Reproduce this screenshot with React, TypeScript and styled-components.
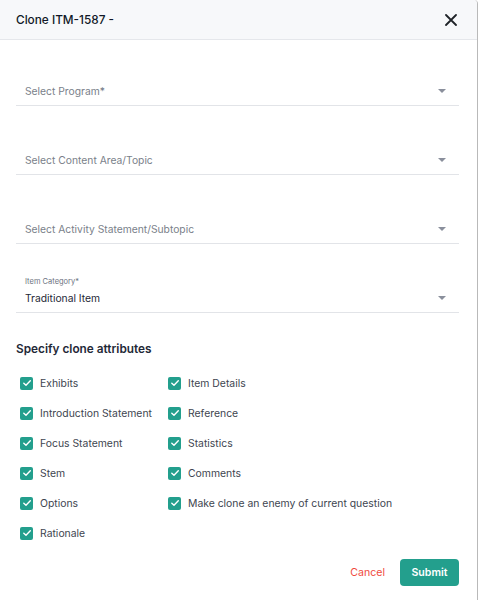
import React, { useState } from 'react';
import styled, { createGlobalStyle } from 'styled-components';

const GlobalStyle = createGlobalStyle`
  html, body {
    margin: 0;
    padding: 0;
    background: #ffffff;
  }
  body {
    font-family: Inter, "Noto Sans", sans-serif;
    -webkit-font-smoothing: antialiased;
  }
  * {
    box-sizing: border-box;
  }
`;

const Modal = styled.div`
  width: 478px;
  min-height: 600px;
  background: #ffffff;
  border-right: 1px solid #b9b9b9;
  border-top-right-radius: 4px;
  display: flex;
  flex-direction: column;
`;

const Header = styled.div`
  height: 40px;
  display: flex;
  align-items: center;
  justify-content: space-between;
  padding: 0 19px 0 16px;
  background: #f7f8fa;
  border-bottom: 1px solid #e5e7eb;
  border-top-right-radius: 4px;
`;

const Title = styled.h2`
  margin: 0;
  font-size: 11.8px;
  font-weight: 500;
  color: #111827;
`;

const CloseButton = styled.button`
  border: none;
  background: none;
  padding: 0;
  width: 14px;
  height: 14px;
  display: flex;
  align-items: center;
  justify-content: center;
  cursor: pointer;
`;

const Body = styled.div`
  padding: 17px 18px 0 16px;
  display: flex;
  flex-direction: column;
`;

const Fields = styled.div`
  display: flex;
  flex-direction: column;
  gap: 20px;
`;

const Field = styled.div`
  height: 49px;
  border-bottom: 1px solid #e2e4e8;
  display: flex;
  align-items: flex-end;
  justify-content: space-between;
  padding: 0 13px 7px 9px;
  cursor: pointer;
`;

const FieldText = styled.div`
  display: flex;
  flex-direction: column;
  gap: 4px;
`;

const FloatLabel = styled.span`
  font-size: 7.5px;
  line-height: 10px;
  color: #6b7280;
`;

const Value = styled.span<{ $placeholder?: boolean }>`
  font-size: 10.3px;
  line-height: 14px;
  color: ${p => (p.$placeholder ? '#7a7f8a' : '#1f2937')};
`;

const Caret = styled.span`
  width: 0;
  height: 0;
  border-left: 4px solid transparent;
  border-right: 4px solid transparent;
  border-top: 4px solid #8a8f9c;
  margin-bottom: 5px;
`;

const SectionTitle = styled.h3`
  margin: 27px 0 0;
  font-size: 11.8px;
  line-height: 18px;
  font-weight: 600;
  color: #1f2937;
`;

const CheckGrid = styled.div`
  margin-top: 10px;
  display: grid;
  grid-template-columns: 148px 1fr;
  grid-template-rows: repeat(6, 30px);
  grid-auto-flow: column;
`;

const CheckRow = styled.label`
  display: flex;
  align-items: center;
  gap: 7px;
  padding-left: 4px;
  font-size: 10.4px;
  color: #40454f;
  cursor: pointer;
  white-space: nowrap;
`;

const Box = styled.span<{ $checked: boolean }>`
  width: 13px;
  height: 13px;
  border-radius: 2px;
  background: ${p => (p.$checked ? '#239f8d' : '#ffffff')};
  border: ${p => (p.$checked ? 'none' : '1px solid #9ca3af')};
  display: flex;
  align-items: center;
  justify-content: center;
  flex-shrink: 0;
`;

const Footer = styled.div`
  margin-top: 11px;
  display: flex;
  justify-content: flex-end;
  align-items: center;
  gap: 15px;
`;

const CancelButton = styled.button`
  border: none;
  background: none;
  padding: 0;
  font-family: inherit;
  font-size: 10.6px;
  color: #f04a3e;
  cursor: pointer;
`;

const SubmitButton = styled.button`
  height: 27px;
  width: 59px;
  padding: 0;
  border: none;
  border-radius: 4px;
  background: #239f8d;
  color: #ffffff;
  font-family: inherit;
  font-size: 10.6px;
  font-weight: 600;
  cursor: pointer;
`;

const selects = [
  { label: '', value: 'Select Program*', placeholder: true },
  { label: '', value: 'Select Content Area/Topic', placeholder: true },
  { label: '', value: 'Select Activity Statement/Subtopic', placeholder: true },
  { label: 'Item Category*', value: 'Traditional Item', placeholder: false },
];

const attributes = [
  'Exhibits',
  'Introduction Statement',
  'Focus Statement',
  'Stem',
  'Options',
  'Rationale',
  'Item Details',
  'Reference',
  'Statistics',
  'Comments',
  'Make clone an enemy of current question',
];

const CloseIcon = () => (
  <svg width="12" height="12" viewBox="0 0 12 12">
    <path d="M1 1 L11 11 M11 1 L1 11" stroke="#1f2328" strokeWidth="1.8" strokeLinecap="round" />
  </svg>
);

const CheckIcon = () => (
  <svg width="10" height="10" viewBox="0 0 10 10">
    <path d="M1.8 5.2 L4 7.3 L8.3 2.8" stroke="#ffffff" strokeWidth="1.4" fill="none" strokeLinecap="round" strokeLinejoin="round" />
  </svg>
);

const App: React.FC = () => {
  const [checked, setChecked] = useState<boolean[]>(attributes.map(() => true));

  const toggle = (i: number) => {
    setChecked(prev => prev.map((c, j) => (j === i ? !c : c)));
  };

  return (
    <>
      <GlobalStyle />
      <Modal>
        <Header>
          <Title>Clone ITM-1587 -</Title>
          <CloseButton aria-label="Close">
            <CloseIcon />
          </CloseButton>
        </Header>
        <Body>
          <Fields>
            {selects.map(s => (
              <Field key={s.value}>
                <FieldText>
                  {s.label && <FloatLabel>{s.label}</FloatLabel>}
                  <Value $placeholder={s.placeholder}>{s.value}</Value>
                </FieldText>
                <Caret />
              </Field>
            ))}
          </Fields>

          <SectionTitle>Specify clone attributes</SectionTitle>
          <CheckGrid>
            {attributes.map((a, i) => (
              <CheckRow key={a} onClick={() => toggle(i)}>
                <Box $checked={checked[i]}>{checked[i] && <CheckIcon />}</Box>
                {a}
              </CheckRow>
            ))}
          </CheckGrid>

          <Footer>
            <CancelButton>Cancel</CancelButton>
            <SubmitButton>Submit</SubmitButton>
          </Footer>
        </Body>
      </Modal>
    </>
  );
};

export default App;
